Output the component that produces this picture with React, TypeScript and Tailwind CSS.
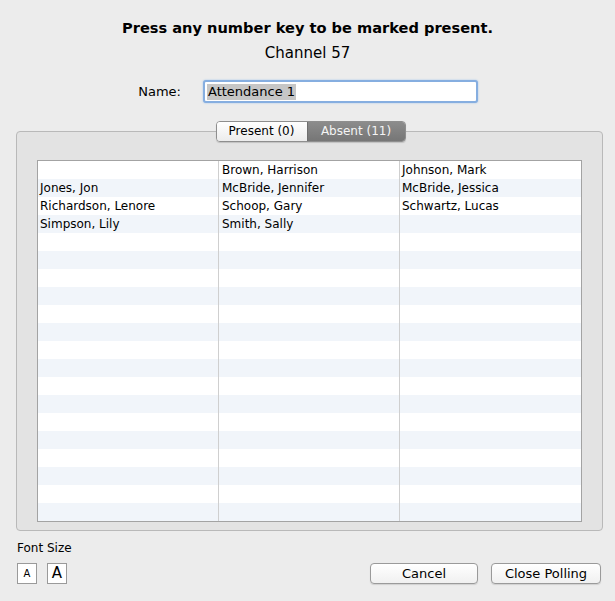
import React from 'react';

const rows: [string, string, string][] = [
  ['', 'Brown, Harrison', 'Johnson, Mark'],
  ['Jones, Jon', 'McBride, Jennifer', 'McBride, Jessica'],
  ['Richardson, Lenore', 'Schoop, Gary', 'Schwartz, Lucas'],
  ['Simpson, Lily', 'Smith, Sally', ''],
];

export default function App() {
  const allRows = Array.from({ length: 20 }, (_, i) => rows[i] ?? ['', '', '']);

  return (
    <div className="w-[615px] h-[601px] bg-[#ececec] text-black font-['Lucida_Grande','DejaVu_Sans',sans-serif] flex flex-col overflow-hidden">
      {/* Header */}
      <div className="pt-[18px] text-center">
        <h1 className="text-[14.6px] font-bold leading-[20px]">Press any number key to be marked present.</h1>
        <p className="text-[15px] leading-[20px] mt-[5px]">Channel 57</p>
      </div>

      {/* Name field */}
      <div className="flex items-center mt-[17px] h-[23px]">
        <label className="text-[13px] w-[181px] text-right">Name:</label>
        <div className="ml-[22px] w-[275px] h-[23px] rounded-[3px] border-2 border-[#86aee0] bg-white flex items-center pl-[2px] shadow-[0_0_2px_#9cc0ea]">
          <span className="text-[13px] leading-[16px] bg-[#c6c6c6] px-[1px]">Attendance 1</span>
        </div>
      </div>

      {/* Tabs + group box */}
      <div className="mt-[18px] flex flex-col">
        <div className="relative z-10 flex justify-center pl-[6px]">
          <div className="flex h-[21px] rounded-[4px] border border-[#8e8e8e] overflow-hidden text-[12px] leading-[19px] shadow-[0_1px_1px_rgba(0,0,0,0.15)]">
            <div className="w-[90px] bg-gradient-to-b from-white to-[#ececec] text-center">Present (0)</div>
            <div className="w-[98px] border-l border-[#6f6f6f] bg-gradient-to-b from-[#8c8c8c] to-[#767676] text-center text-[#f4f4f4]">Absent (11)</div>
          </div>
        </div>
        <div className="-mt-[11px] ml-[16px] w-[587px] h-[400px] rounded-[4px] border border-[#b9b9b9] bg-[#e3e3e3] pt-[28px] px-[20px]">
          <div className="border border-[#a3a3a3] bg-white">
            {allRows.map((r, i) => (
              <div key={i} className={`grid grid-cols-[181px_181px_1fr] h-[18px] text-[12px] leading-[18px] ${i % 2 === 1 ? 'bg-[#f1f5fa]' : 'bg-white'}`}>
                <div className="pl-[2px] border-r border-[#cfcfcf] truncate">{r[0]}</div>
                <div className="pl-[3px] border-r border-[#cfcfcf] truncate">{r[1]}</div>
                <div className="pl-[2px] truncate">{r[2]}</div>
              </div>
            ))}
          </div>
        </div>
      </div>

      {/* Footer */}
      <div className="mt-[9px] px-[17px] flex items-end justify-between">
        <div className="flex flex-col">
          <span className="text-[12px] leading-[16px]">Font Size</span>
          <div className="flex gap-[10px] mt-[7px]">
            <button className="w-[20px] h-[21px] border border-[#9a9a9a] bg-white text-[10px] leading-[19px] text-center">A</button>
            <button className="w-[20px] h-[21px] border border-[#9a9a9a] bg-white text-[15px] leading-[19px] text-center">A</button>
          </div>
        </div>
        <div className="flex gap-[13px] mr-[-3px]">
          <button className="w-[108px] h-[21px] rounded-[4px] border border-[#9a9a9a] bg-gradient-to-b from-white to-[#f0f0f0] text-[13px] leading-[19px] shadow-[0_1px_1px_rgba(0,0,0,0.12)]">Cancel</button>
          <button className="w-[110px] h-[21px] rounded-[4px] border border-[#9a9a9a] bg-gradient-to-b from-white to-[#f0f0f0] text-[13px] leading-[19px] shadow-[0_1px_1px_rgba(0,0,0,0.12)]">Close Polling</button>
        </div>
      </div>
    </div>
  );
}
